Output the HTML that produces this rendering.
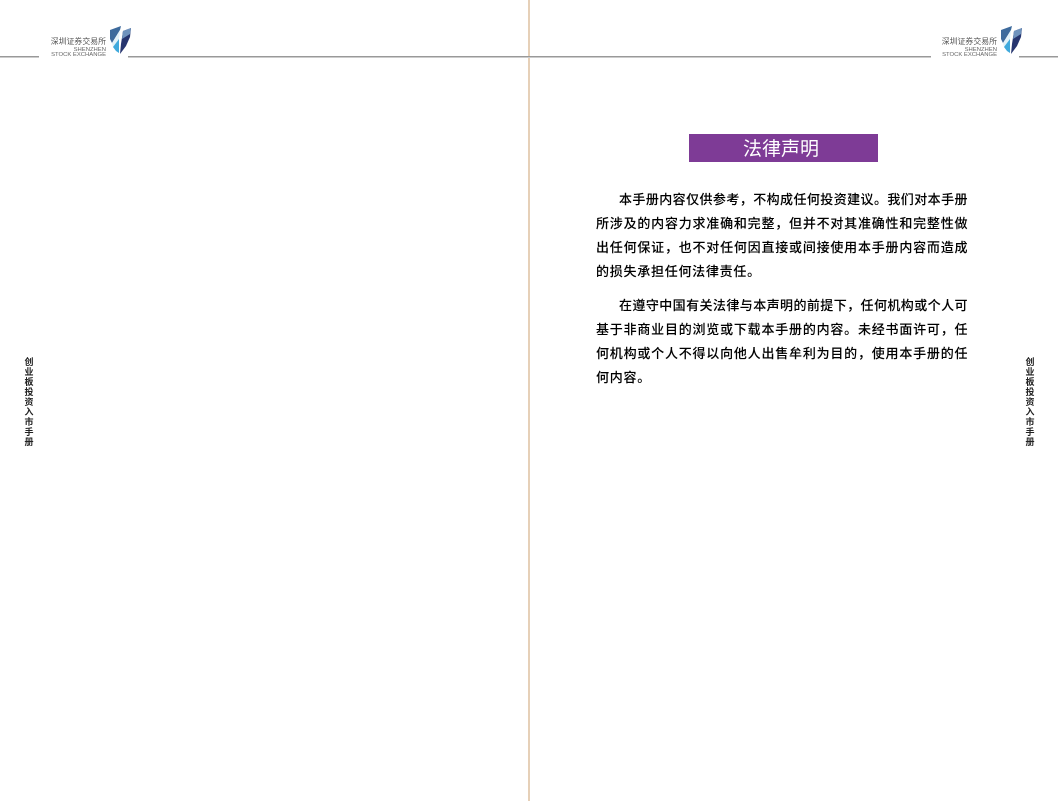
<!DOCTYPE html>
<html lang="zh"><head><meta charset="utf-8"><title>法律声明</title>
<style>
html,body{margin:0;padding:0;background:#fff}
body{position:relative;width:1058px;height:801px;overflow:hidden;font-family:"Liberation Sans","Noto Sans CJK SC",sans-serif}
.a{position:absolute}
.rule{position:absolute;top:56px;height:1px;background:#999;box-shadow:0 1px 0 #ccc}
.l{position:absolute;left:596px;width:371.5px;height:24px;line-height:24px;font-size:13px;color:#000;text-align:justify;text-align-last:justify;font-weight:500;white-space:nowrap;-webkit-text-stroke:.05px #000}
.i{left:619px;width:348.5px}
.s{text-align-last:left;letter-spacing:.74px}
.cn{position:absolute;width:70px;text-align:right;font-size:7.9px;line-height:9px;color:#555;white-space:nowrap}
.en{position:absolute;width:70px;text-align:right;font-size:5.9px;line-height:5.4px;color:#666;white-space:nowrap}
.sp{position:absolute;top:357px;width:12px;text-align:center;font-size:9px;line-height:10.05px;font-weight:700;color:#222}
</style></head><body>
<div class="a" style="left:528px;top:0;width:2px;height:801px;background:#e6d0b8"></div>
<div class="rule" style="left:0;width:39px"></div>
<div class="rule" style="left:128px;width:803px"></div>
<div class="rule" style="left:1019px;width:39px"></div>

<div class="cn" style="left:36px;top:37px">深圳证券交易所</div>
<div class="en" style="left:36px;top:48px">SHENZHEN<br>STOCK EXCHANGE</div>
<svg class="a" style="left:109px;top:26px" width="23" height="28" viewBox="0 0 23 28">
<path d="M1 4 L12 0 L11 4 L3 17 L1 13Z" fill="#3d6a9c"/>
<path d="M11 4 L10 13 L4 21 L3 17Z" fill="#e2f1f8"/>
<path d="M4 21 L10 13 L10 27 L7 25Z" fill="#3fa9dc"/>
<path d="M14 5 L22 2 L21 11 L17 20 L11 28 L12 18Z" fill="#26356f"/>
<path d="M14 5 L22 2 L21 8 L13 13Z" fill="#6f93bd"/>
</svg>

<div class="cn" style="left:927px;top:37px">深圳证券交易所</div>
<div class="en" style="left:927px;top:48px">SHENZHEN<br>STOCK EXCHANGE</div>
<svg class="a" style="left:1000px;top:26px" width="23" height="28" viewBox="0 0 23 28">
<path d="M1 4 L12 0 L11 4 L3 17 L1 13Z" fill="#3d6a9c"/>
<path d="M11 4 L10 13 L4 21 L3 17Z" fill="#e2f1f8"/>
<path d="M4 21 L10 13 L10 27 L7 25Z" fill="#3fa9dc"/>
<path d="M14 5 L22 2 L21 11 L17 20 L11 28 L12 18Z" fill="#26356f"/>
<path d="M14 5 L22 2 L21 8 L13 13Z" fill="#6f93bd"/>
</svg>

<div class="sp" style="left:23px">创<br>业<br>板<br>投<br>资<br>入<br>市<br>手<br>册</div>
<div class="sp" style="left:1024px">创<br>业<br>板<br>投<br>资<br>入<br>市<br>手<br>册</div>

<div class="a" style="left:689px;top:134px;width:184px;padding-right:5px;height:28px;background:#7e3b96;color:#fff;font-size:19px;line-height:32px;text-align:center">法律声明</div>

<div class="l i" style="top:188px">本手册内容仅供参考&#65292;不构成任何投资建议。我们对本手册</div>
<div class="l" style="top:212px">所涉及的内容力求准确和完整&#65292;但并不对其准确性和完整性做</div>
<div class="l" style="top:236px">出任何保证&#65292;也不对任何因直接或间接使用本手册内容而造成</div>
<div class="l s" style="top:260px">的损失承担任何法律责任。</div>
<div class="l i" style="top:294px">在遵守中国有关法律与本声明的前提下&#65292;任何机构或个人可</div>
<div class="l" style="top:318px">基于非商业目的浏览或下载本手册的内容。未经书面许可&#65292;任</div>
<div class="l" style="top:342px">何机构或个人不得以向他人出售牟利为目的&#65292;使用本手册的任</div>
<div class="l s" style="top:366px">何内容。</div>
</body></html>
